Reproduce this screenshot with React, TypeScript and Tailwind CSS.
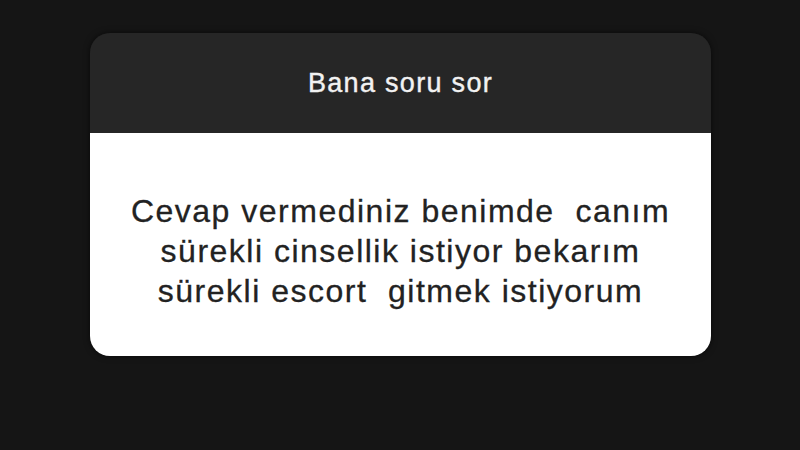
export default function App() {
  return (
    <div
      className="w-[800px] h-[450px] bg-[#151515] pt-[33px] pl-[90px]"
      style={{ fontFamily: '"Liberation Sans", Arial, sans-serif' }}
    >
      <div className="w-[621px] h-[323px] rounded-[20px] overflow-hidden flex flex-col shadow-[0_0_6px_rgba(0,0,0,0.6)]">
        <div className="h-[100px] bg-[#262626] flex items-center justify-center">
          <span className="text-[27px] text-[#f2f2f2] tracking-[1.3px] leading-none [-webkit-text-stroke:0.4px_#f2f2f2]">Bana soru sor</span>
        </div>
        <div className="flex-1 bg-white flex flex-col items-center justify-center pt-[12px]">
          <p className="text-[32px] leading-[40px] text-[#222222] tracking-[1.5px] text-center whitespace-pre [-webkit-text-stroke:0.3px_#222222]">
            {"Cevap vermediniz benimde  canım\nsürekli cinsellik istiyor bekarım\nsürekli escort  gitmek istiyorum"}
          </p>
        </div>
      </div>
    </div>
  );
}
